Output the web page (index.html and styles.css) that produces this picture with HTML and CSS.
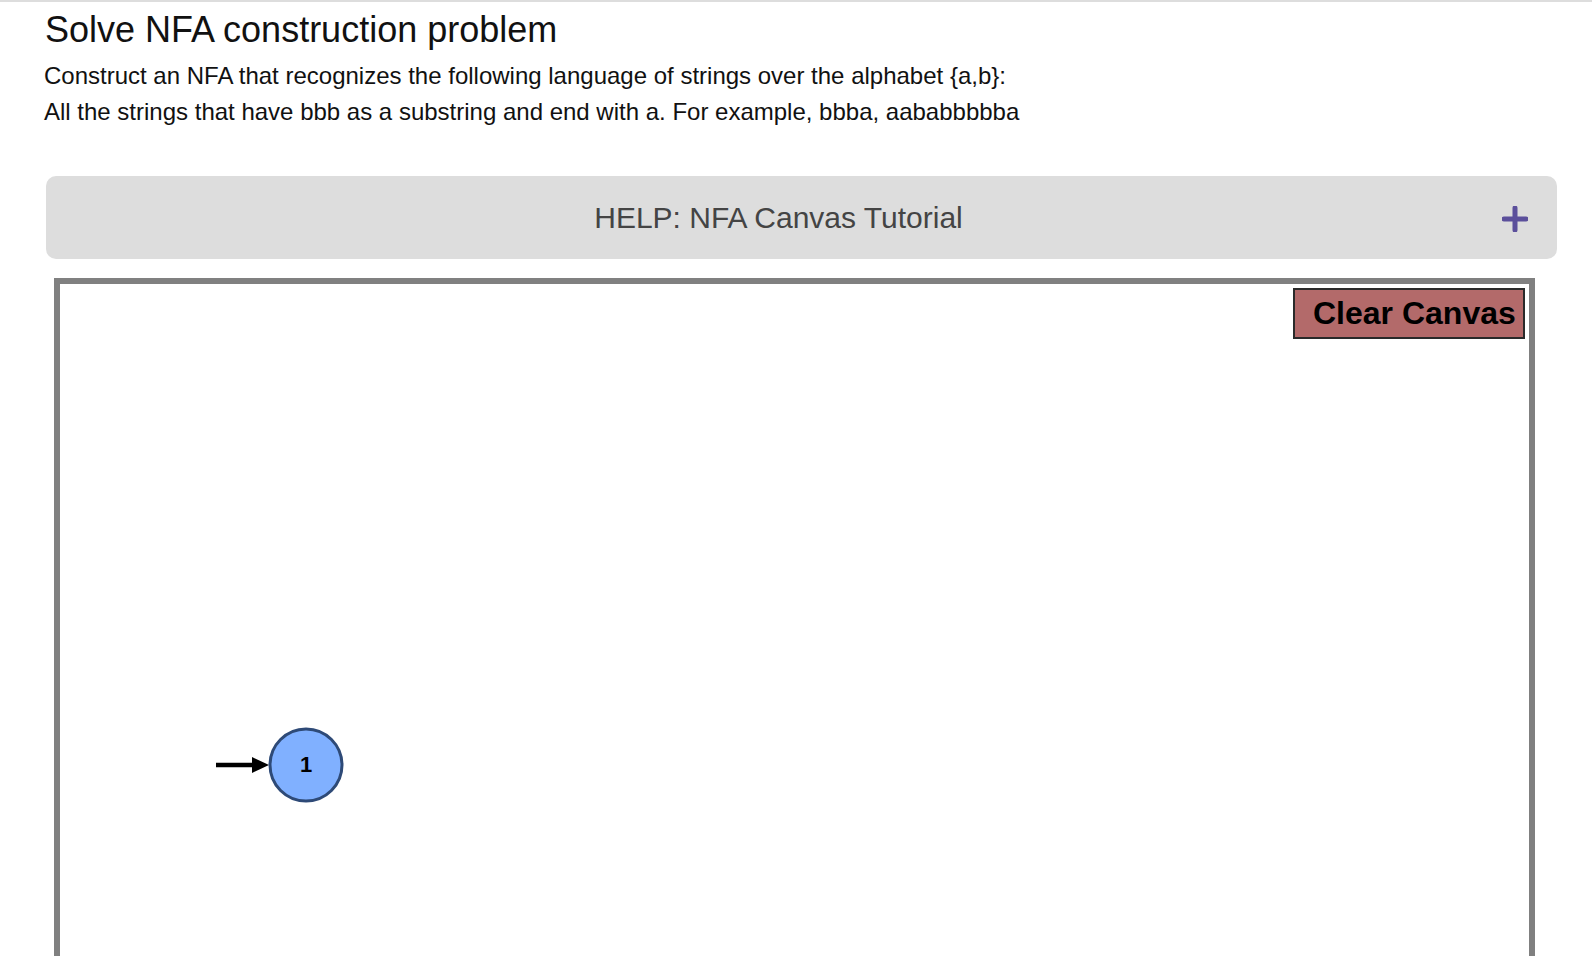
FILE: index.html
```html
<!DOCTYPE html>
<html>
<head>
    <meta charset="UTF-8">
    <title>Solve NFA construction problem</title>
    <link rel="stylesheet" href="styles.css">
</head>
<body>
    <div class="page">
        <h1>Solve NFA construction problem</h1>
        <div class="prompt">
            Construct an NFA that recognizes the following language of strings over the alphabet {a,b}:<br>
            All the strings that have bbb as a substring and end with a. For example, bbba, aababbbbba
        </div>

        <div class="help-bar">
            <span class="help-title">HELP: NFA Canvas Tutorial</span>
            <svg class="help-plus" width="26" height="26" viewBox="0 0 26 26">
                <path d="M13 2 V24 M2 13 H24" stroke="#5b4f9b" stroke-width="5" stroke-linecap="round"/>
            </svg>
        </div>

        <div class="nfa-canvas">
            <button class="clear-button">Clear Canvas</button>
            <svg class="nfa-drawing" width="1469" height="720">
                <line x1="156" y1="481" x2="196" y2="481" stroke="#000" stroke-width="4.5"/>
                <polygon points="192,473 209,481 192,489" fill="#000"/>
                <circle cx="246" cy="481" r="36" fill="#80b0ff" stroke="#2e4a77" stroke-width="3"/>
                <text x="246" y="488" text-anchor="middle" class="state-label">1</text>
            </svg>
        </div>
    </div>
</body>
</html>
```

FILE: styles.css
```css
body {
    font-family: "Liberation Sans", Arial, sans-serif;
    margin: 0;
    border-top: 2px solid #dddddd;
    background: #fff;
    color: #111;
}

.page {
    padding-left: 45px;
}

h1 {
    font-size: 36px;
    font-weight: normal;
    line-height: 41px;
    margin: 7px 0 0 0;
}

.prompt {
    font-size: 24px;
    line-height: 36px;
    margin-top: 8px;
    margin-left: -1px;
}

.help-bar {
    position: relative;
    margin: 46px 0 0 1px;
    width: 1511px;
    height: 83px;
    box-sizing: border-box;
    padding-right: 46px;
    background: #dddddd;
    border-radius: 10px;
    display: flex;
    align-items: center;
    justify-content: center;
}

.help-title {
    font-size: 30px;
    color: #444;
}

.help-plus {
    position: absolute;
    right: 29px;
    top: 30px;
}

.nfa-canvas {
    position: relative;
    margin: 19px 0 0 9px;
    width: 1481px;
    height: 732px;
    box-sizing: border-box;
    border: 6px solid #808080;
    background: #fff;
}

.nfa-drawing {
    display: block;
}

.clear-button {
    position: absolute;
    top: 4px;
    right: 4px;
    width: 232px;
    height: 51px;
    padding: 0 8px 0 18px;
    text-align: right;
    white-space: nowrap;
    font-family: "Liberation Sans", Arial, sans-serif;
    font-size: 32px;
    font-weight: bold;
    color: #000;
    background: #b36a6a;
    border: 2px solid #2a2a2a;
    cursor: pointer;
}

.state-label {
    font-family: "Liberation Sans", Arial, sans-serif;
    font-size: 22px;
    font-weight: bold;
    fill: #000;
}
```
